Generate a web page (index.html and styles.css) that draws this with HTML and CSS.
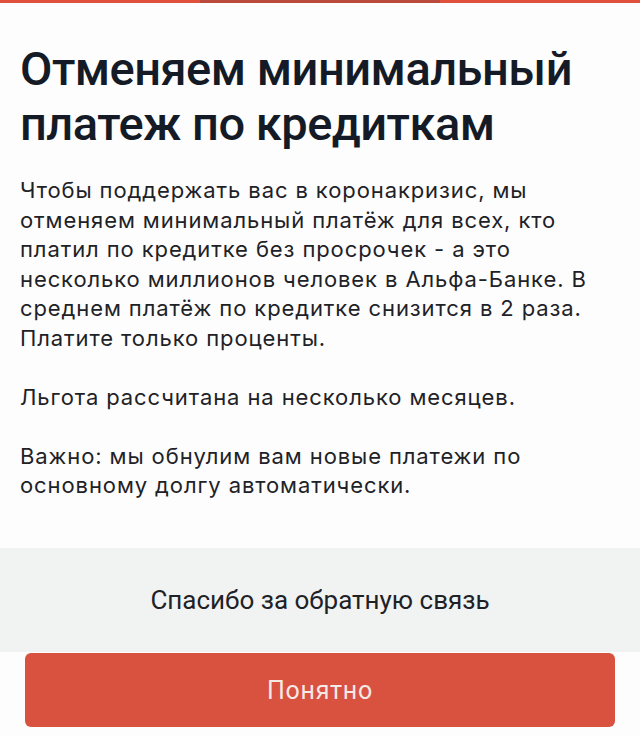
FILE: index.html
```html
<!DOCTYPE html>
<html lang="ru">
<head>
<meta charset="utf-8">
<link rel="stylesheet" href="styles.css">
</head>
<body>
<div class="screen">
  <div class="topbar"><span class="seg"></span></div>
  <main class="content">
    <h1 class="title">Отменяем минимальный<br>платеж по кредиткам</h1>
    <p class="text">Чтобы поддержать вас в коронакризис, мы<br>отменяем минимальный платёж для всех, кто<br>платил по кредитке без просрочек - а это<br>несколько миллионов человек в Альфа-Банке. В<br>среднем платёж по кредитке снизится в 2 раза.<br>Платите только проценты.</p>
    <p class="text">Льгота рассчитана на несколько месяцев.</p>
    <p class="text">Важно: мы обнулим вам новые платежи по<br>основному долгу автоматически.</p>
  </main>
  <div class="feedback">Спасибо за обратную связь</div>
  <div class="actions">
    <button class="btn">Понятно</button>
  </div>
</div>
</body>
</html>
```
FILE: styles.css
```css
html, body {
  margin: 0;
  padding: 0;
  background: #fdfdfd;
}
.screen {
  width: 640px;
  height: 736px;
  display: flex;
  flex-direction: column;
  font-family: Roboto, "Liberation Sans", sans-serif;
  color: #1e2227;
  overflow: hidden;
}
.topbar {
  height: 3px;
  background: #e0513d;
  display: flex;
  justify-content: center;
  flex-shrink: 0;
}
.topbar .seg {
  width: 240px;
  background: #b94a3c;
}
.content {
  padding: 38px 20px 0 20px;
  flex: 1;
}
.title {
  margin: 0 0 25px 0;
  font-size: 47px;
  line-height: 55px;
  font-weight: 500;
  letter-spacing: -0.5px;
  color: #141b26;
  white-space: nowrap;
}
.text {
  margin: 0 0 29.5px 0;
  font-family: Inter, Roboto, sans-serif;
  font-size: 22px;
  line-height: 29.5px;
  letter-spacing: 0.9px;
  white-space: nowrap;
}
.feedback {
  height: 104px;
  flex-shrink: 0;
  background: #f1f2f2;
  display: flex;
  align-items: center;
  justify-content: center;
  font-size: 26px;
  color: #1e2227;
}
.actions {
  flex-shrink: 0;
  padding: 1px 25px 9px 25px;
}
.btn {
  display: block;
  width: 100%;
  height: 74px;
  border: none;
  border-radius: 6px;
  background: #d9513f;
  color: #f5e9e6;
  font-family: Roboto, "Liberation Sans", sans-serif;
  font-size: 25px;
  letter-spacing: 0.7px;
}
```
